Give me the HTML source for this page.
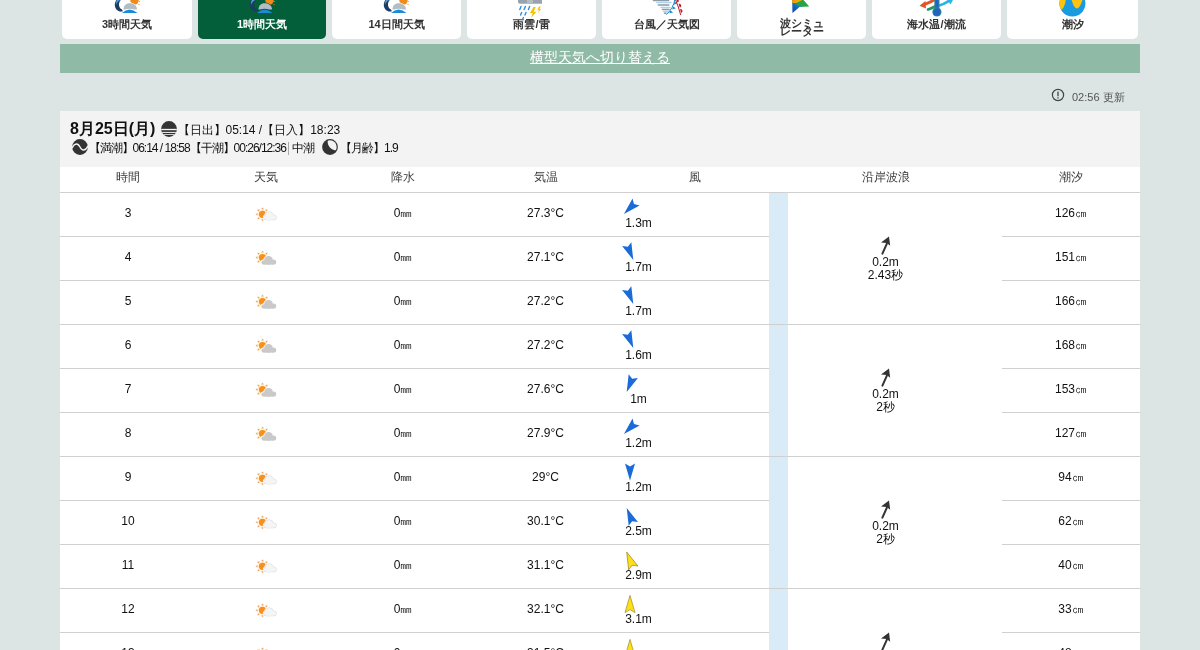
<!DOCTYPE html><html><head><meta charset="utf-8"><style>
*{box-sizing:border-box}
html,body{margin:0;padding:0}
body{will-change:transform;width:1200px;height:650px;overflow:hidden;background:#dce5e3;font-family:"Liberation Sans",sans-serif;position:relative;color:#222}
.abs{position:absolute}
.tab{position:absolute;top:-25px;height:64px;background:#fff;border-radius:5px;overflow:hidden}
.tab.on{background:#035e3a}
.ic{position:absolute}
.tab .lb{position:absolute;left:0;right:0;top:42.5px;text-align:center;font-size:11px;font-weight:bold;color:#333;line-height:13px;white-space:nowrap}
.tab.on .lb{color:#fff}
.tab .lb2{line-height:8.5px;top:43.5px}
.bar{position:absolute;left:60px;top:44px;width:1080px;height:29px;background:#8fbba6;text-align:center}
.bar span{color:#fff;font-size:14px;text-decoration:underline;line-height:28px;position:relative;top:-1px}
.card{position:absolute;left:60px;top:111px;width:1080px;height:560px;background:#fff}
.hd{position:absolute;left:0;top:0;width:1080px;height:56px;background:#f3f3f3}
.t{position:absolute;white-space:nowrap;line-height:14px}
.c{text-align:center}
.th{font-size:12px;color:#3a3a3a}
.td{font-size:12px;color:#111}
.ln{position:absolute;height:1px;background:#d0d0d0}
.strip{position:absolute;left:709px;top:82px;width:19px;height:500px;background:#d8ebf6}
</style></head><body>

<div class="tab" style="left:62px;width:130px"><div class="lb">3時間天気</div></div>
<svg class="ic" style="left:113.7px;top:-4px" width="28" height="17" viewBox="0 0 28 17">
<path d="M6 0 C2 3 -0.5 8 1.5 12 C3 15 6 16 9 15.5 L8 13.5 C5 12 4 8 6 5 C7 3.5 8 3 10 3 L11 0 Z" fill="#1d3b63"/>
<path d="M6 0 C3 3 1.5 6 2 9 C3 6 5 4 8 3.5 L10.5 3 L11.5 0Z" fill="#5a9fd6"/>
<circle cx="20.5" cy="4.5" r="4.2" fill="#f08a1c"/>
<circle cx="25.3" cy="5.5" r="0.6" fill="#f08a1c"/><circle cx="25" cy="8.5" r="0.6" fill="#f08a1c"/>
<path d="M8.5 13.8 C8.5 9 11.5 6.5 15.5 6.5 C19 6.5 23.5 8.5 23.5 13.5 Z" fill="#fff"/>
<path d="M9.5 13.5 C9.5 9.5 12 7.2 15.5 7.2 C19 7.2 23 9 23 13.5 Z" fill="#b3bdc6"/>
<path d="M7 17 Q15.5 8.6 24.5 17Z" fill="#fff"/>
<path d="M8 17 Q15.5 10 23.5 17Z" fill="#1b8bd8"/>
</svg>
<div class="tab on" style="left:198px;width:128px"><div class="lb">1時間天気</div></div>
<svg class="ic" style="left:248.7px;top:-4px" width="28" height="17" viewBox="0 0 28 17">
<path d="M6 0 C2 3 -0.5 8 1.5 12 C3 15 6 16 9 15.5 L8 13.5 C5 12 4 8 6 5 C7 3.5 8 3 10 3 L11 0 Z" fill="#1d3b63"/>
<path d="M6 0 C3 3 1.5 6 2 9 C3 6 5 4 8 3.5 L10.5 3 L11.5 0Z" fill="#5a9fd6"/>
<circle cx="20.5" cy="4.5" r="4.2" fill="#f08a1c"/>
<circle cx="25.3" cy="5.5" r="0.6" fill="#f08a1c"/><circle cx="25" cy="8.5" r="0.6" fill="#f08a1c"/>
<path d="M8.5 13.8 C8.5 9 11.5 6.5 15.5 6.5 C19 6.5 23.5 8.5 23.5 13.5 Z" fill="#035e3a"/>
<path d="M9.5 13.5 C9.5 9.5 12 7.2 15.5 7.2 C19 7.2 23 9 23 13.5 Z" fill="#b3bdc6"/>
<path d="M7 17 Q15.5 8.6 24.5 17Z" fill="#035e3a"/>
<path d="M8 17 Q15.5 10 23.5 17Z" fill="#1b8bd8"/>
</svg>
<div class="tab" style="left:332px;width:129px"><div class="lb">14日間天気</div></div>
<svg class="ic" style="left:383.2px;top:-4px" width="28" height="17" viewBox="0 0 28 17">
<path d="M6 0 C2 3 -0.5 8 1.5 12 C3 15 6 16 9 15.5 L8 13.5 C5 12 4 8 6 5 C7 3.5 8 3 10 3 L11 0 Z" fill="#1d3b63"/>
<path d="M6 0 C3 3 1.5 6 2 9 C3 6 5 4 8 3.5 L10.5 3 L11.5 0Z" fill="#5a9fd6"/>
<circle cx="20.5" cy="4.5" r="4.2" fill="#f08a1c"/>
<circle cx="25.3" cy="5.5" r="0.6" fill="#f08a1c"/><circle cx="25" cy="8.5" r="0.6" fill="#f08a1c"/>
<path d="M8.5 13.8 C8.5 9 11.5 6.5 15.5 6.5 C19 6.5 23.5 8.5 23.5 13.5 Z" fill="#fff"/>
<path d="M9.5 13.5 C9.5 9.5 12 7.2 15.5 7.2 C19 7.2 23 9 23 13.5 Z" fill="#b3bdc6"/>
<path d="M7 17 Q15.5 8.6 24.5 17Z" fill="#fff"/>
<path d="M8 17 Q15.5 10 23.5 17Z" fill="#1b8bd8"/>
</svg>
<div class="tab" style="left:467px;width:129px"><div class="lb">雨雲/雷</div></div>
<svg class="ic" style="left:514.0px;top:-6px" width="28" height="27" viewBox="0 0 28 27">
<rect x="4" y="0" width="25" height="9.8" rx="1.8" fill="#9aa3ab"/>
<rect x="13" y="0" width="6" height="9.8" fill="#b4bcc3"/>
<g stroke="#2a8fd6" stroke-width="1.4" stroke-linecap="round"><path d="M7 12.5 L5.8 15.5"/><path d="M11.3 12.5 L10.1 15.5"/><path d="M15.6 12.5 L14.4 15.5"/><path d="M7.6 18.5 L6.6 21"/><path d="M12 18.5 L11 21"/><path d="M9.5 23.5 L8.7 25"/></g>
<path d="M19.5 13 L16 19 L18.8 19 L17 24 L22.5 17.8 L19.7 17.8 L21.8 13Z" fill="#f7c300"/>
<path d="M25 12.5 L23.3 15.8 L24.9 15.8 L24 19 L27.2 15 L25.6 15 L26.7 12.5Z" fill="#f7c300"/>
</svg>
<div class="tab" style="left:602px;width:129px"><div class="lb">台風／天気図</div></div>
<svg class="ic" style="left:651.5px;top:-1px" width="34" height="18" viewBox="0 0 34 18">
<g stroke-linecap="round" stroke-width="1.5">
<path d="M1.5 1.5 L16.5 1.5" stroke="#8e9aa6"/><path d="M4.8 3.6 L19 3.6" stroke="#a9d3ee"/><path d="M6.3 6 L16.8 6" stroke="#8e9aa6"/><path d="M9 8.5 L18 8.5" stroke="#a9d3ee"/><path d="M10.5 10.6 L17 10.6" stroke="#8e9aa6"/><path d="M11.8 12.6 L16 12.6" stroke="#a9d3ee"/><path d="M12.5 14.2 L14 14.2" stroke="#8e9aa6"/>
</g>
<path d="M23 0 Q21.5 9 14.5 15.5" stroke="#1e8ad0" stroke-width="1" fill="none"/>
<path d="M22.3 2.5 L25.3 4.2 L22 5.8Z M21 7.4 L24 9.2 L20.2 10.6Z M18.4 11.5 L21.2 13.4 L17.2 14.2Z" fill="#1e8ad0"/>
<g transform="translate(-1.3 0)"><path d="M24.5 0 Q28 8 30 16" stroke="#c0182a" stroke-width="1" fill="none"/>
<path d="M25.3 0 A1.7 1.7 0 0 1 26.8 3.6Z M27.9 4.8 A1.8 1.8 0 0 1 29 8.6Z M29.4 10.2 A1.8 1.8 0 0 1 30.3 14Z" fill="#c0182a"/></g>
</svg>
<div class="tab" style="left:737px;width:129px"><div class="lb lb2">波シミュ<br>レーター</div></div>
<svg class="ic" style="left:791.5px;top:-4px" width="20" height="18" viewBox="0 0 20 18">
<defs><linearGradient id="wg" x1="0" y1="1" x2="0.7" y2="0"><stop offset="0" stop-color="#0b3c9c"/><stop offset="0.42" stop-color="#1a6fc8"/><stop offset="0.5" stop-color="#27a24c"/><stop offset="1" stop-color="#2aa048"/></linearGradient>
<linearGradient id="wg2" x1="0" y1="0" x2="1" y2="1"><stop offset="0" stop-color="#f07a10"/><stop offset="1" stop-color="#f5c800"/></linearGradient></defs>
<path d="M0 0 L8 0 L17.2 10.4 L7.5 11 L0.5 17 Z" fill="url(#wg)"/>
<path d="M0 0 L9 0 L9.5 4.5 L4 7 L0.2 7Z" fill="url(#wg2)" opacity="0.95"/>
</svg>
<div class="tab" style="left:872px;width:129px"><div class="lb">海水温/潮流</div></div>
<svg class="ic" style="left:914.5px;top:-4px" width="42" height="22" viewBox="0 0 42 22">
<path d="M8.5 8.8 C12 7.5 16 6 21 3" stroke="#e2532c" stroke-width="3" fill="none" stroke-linecap="round"/>
<path d="M4.5 9.8 L10.5 5 L11 12.5Z" fill="#e2532c"/>
<path d="M13 13.5 C15.5 12.5 17.5 11.8 20 10.5" stroke="#1e9a5c" stroke-width="2.6" fill="none" stroke-linecap="round"/>
<path d="M24 9.5 C28 8.5 31 6.8 34 4.8" stroke="#2cb4e4" stroke-width="2.6" fill="none" stroke-linecap="round"/>
<path d="M38.5 3 L31.5 2.5 L35.5 8.5Z" fill="#2cb4e4"/>
<rect x="19.3" y="0" width="5.2" height="13" fill="#3a8896"/>
<rect x="20.3" y="0" width="3.2" height="13" fill="#1b66c0"/>
<circle cx="21.9" cy="16" r="4.6" fill="#3a8896"/>
<circle cx="21.9" cy="16" r="3.7" fill="#1b66c0"/>
</svg>
<div class="tab" style="left:1007px;width:131px"><div class="lb">潮汐</div></div>
<svg class="ic" style="left:1059.1px;top:-10px" width="27" height="27" viewBox="0 0 27 27">
<defs><clipPath id="tc"><circle cx="13.4" cy="13.5" r="13"/></clipPath></defs>
<g clip-path="url(#tc)"><rect width="27" height="27" fill="#189be0"/>
<path d="M0 0 L8 0 C7.5 8 6 17 3 19.5 L0 19.5Z" fill="#ffc20e"/>
<path d="M10.5 0 L25.5 0 C24.5 8 21.5 18.5 17.9 18.5 C14.3 18.5 11.8 8 10.5 0Z" fill="#ffc20e"/>
</g></svg>
<div class="bar"><span>横型天気へ切り替える</span></div>
<svg class="abs" style="left:1051px;top:88px" width="14" height="14" viewBox="0 0 14 14"><circle cx="7" cy="7" r="5.6" fill="none" stroke="#444" stroke-width="1.2"/><rect x="6.35" y="3.6" width="1.3" height="4.6" fill="#444"/><rect x="6.35" y="9.2" width="1.3" height="1.3" fill="#444"/></svg>
<div class="t" style="left:1072px;top:90px;font-size:11px;color:#555">02:56 更新</div>
<div class="card">
<div class="hd"></div>
<div class="t" style="left:10px;top:9px;font-size:16px;font-weight:bold;color:#111;line-height:18px">8月25日(月)</div>
<svg class="abs" style="left:101px;top:10px" width="16" height="16" viewBox="0 0 16 16"><defs><clipPath id="cp"><circle cx="8" cy="8" r="7.9"/></clipPath></defs><g clip-path="url(#cp)"><rect width="16" height="16" fill="#333"/><rect y="7.85" width="16" height="1.35" fill="#f3f3f3"/><rect y="10.9" width="16" height="1" fill="#f3f3f3"/><rect y="13.1" width="16" height="0.8" fill="#f3f3f3"/></g></svg>
<div class="t" style="left:117.5px;top:12px;font-size:12px;color:#111">【日出】05:14 /【日入】18:23</div>
<svg class="abs" style="left:12px;top:28px" width="16" height="16" viewBox="0 0 16 16"><circle cx="8" cy="8" r="7.9" fill="#333"/><path d="M0 9.2 C2.3 3.8 6 3.8 8 8 C10 12.2 13.7 12.2 16 6.8" stroke="#f3f3f3" stroke-width="1.4" fill="none"/></svg>
<div class="t" style="left:28.5px;top:30px;font-size:12px;color:#111;letter-spacing:-1px">【満潮】06:14 / 18:58【干潮】00:26/12:36<span style="display:inline-block;width:1.5px;height:13px;background:#aaa;vertical-align:-3px;margin:0 2.5px 0 2px"></span>中潮</div>
<svg class="abs" style="left:262px;top:28px" width="16" height="16" viewBox="0 0 16 16"><defs><clipPath id="mc"><circle cx="8" cy="8" r="6.7"/></clipPath></defs><circle cx="8" cy="8" r="7.9" fill="#333"/><g clip-path="url(#mc)"><ellipse cx="11.5" cy="5" rx="5" ry="6.9" transform="rotate(-40 11.5 5)" fill="#f3f3f3"/></g></svg>
<div class="t" style="left:280px;top:30px;font-size:12px;color:#111;letter-spacing:-1px">【月齢】1.9</div>
<div class="t th c" style="left:0px;width:136px;top:59px">時間</div>
<div class="t th c" style="left:136px;width:139px;top:59px">天気</div>
<div class="t th c" style="left:275px;width:136px;top:59px">降水</div>
<div class="t th c" style="left:411px;width:149px;top:59px">気温</div>
<div class="t th c" style="left:560px;width:149px;top:59px">風</div>
<div class="t th c" style="left:709px;width:233px;top:59px">沿岸波浪</div>
<div class="t th c" style="left:942px;width:138px;top:59px">潮汐</div>
<div class="ln" style="left:0;top:81px;width:1080px"></div>
<div class="strip"></div>
<div class="t td c" style="left:0;width:136px;top:95px">3</div>
<div class="abs" style="left:195px;top:96px;width:22px;height:16px"><svg width="22" height="16" viewBox="0 0 22 16" style="overflow:visible"><path d="M7.50 0.40 L8.80 2.30 L6.20 2.30Z" fill="#d8884a" stroke="#fde3b0" stroke-width="0.5"/><path d="M12.38 2.42 L11.95 4.68 L10.12 2.85Z" fill="#d8884a" stroke="#fde3b0" stroke-width="0.5"/><path d="M14.40 7.30 L12.50 8.60 L12.50 6.00Z" fill="#d8884a" stroke="#fde3b0" stroke-width="0.5"/><path d="M12.38 12.18 L10.12 11.75 L11.95 9.92Z" fill="#d8884a" stroke="#fde3b0" stroke-width="0.5"/><path d="M7.50 14.20 L6.20 12.30 L8.80 12.30Z" fill="#d8884a" stroke="#fde3b0" stroke-width="0.5"/><path d="M2.62 12.18 L3.05 9.92 L4.88 11.75Z" fill="#d8884a" stroke="#fde3b0" stroke-width="0.5"/><path d="M0.60 7.30 L2.50 6.00 L2.50 8.60Z" fill="#d8884a" stroke="#fde3b0" stroke-width="0.5"/><path d="M2.62 2.42 L4.88 2.85 L3.05 4.68Z" fill="#d8884a" stroke="#fde3b0" stroke-width="0.5"/><circle cx="7.5" cy="7.3" r="4.1" fill="#fde7b8"/><circle cx="7.5" cy="7.3" r="3.6" fill="#f7901e"/><circle cx="14.3" cy="8.9" r="4.0" fill="#fff" stroke="#fff" stroke-width="2.2"/><circle cx="18.9" cy="10.4" r="2.3" fill="#fff" stroke="#fff" stroke-width="2.2"/><circle cx="11" cy="10.6" r="2.1" fill="#fff" stroke="#fff" stroke-width="2.2"/><rect x="11" y="10.4" width="7.9" height="2.3" fill="#fff" stroke="#fff" stroke-width="2.2"/><circle cx="14.3" cy="8.9" r="4.0" fill="#ccc" stroke="#cfcfcf" stroke-width="0.9"/><circle cx="18.9" cy="10.4" r="2.3" fill="#ccc" stroke="#cfcfcf" stroke-width="0.9"/><circle cx="11" cy="10.6" r="2.1" fill="#ccc" stroke="#cfcfcf" stroke-width="0.9"/><rect x="11" y="10.4" width="7.9" height="2.3" fill="#ccc" stroke="#cfcfcf" stroke-width="0.9"/><circle cx="14.3" cy="8.9" r="4.0" fill="#f3f5f7"/><circle cx="18.9" cy="10.4" r="2.3" fill="#f3f5f7"/><circle cx="11" cy="10.6" r="2.1" fill="#f3f5f7"/><rect x="11" y="10.4" width="7.9" height="2.3" fill="#f3f5f7"/></svg></div>
<div class="t td c" style="left:275px;width:136px;top:95px">0㎜</div>
<div class="t td c" style="left:411px;width:149px;top:95px">27.3°C</div>
<svg class="abs" style="left:559.7px;top:86.7px" width="20" height="20" viewBox="0 0 20 20"><path d="M5 1.4 L10 4.4 L15 1.4 L10 18.6 Z" fill="#1a6ad8" stroke="none" stroke-width="0" stroke-linejoin="round" transform="rotate(45 10 10)"/></svg>
<div class="t td c" style="left:538.5px;width:80px;top:105px">1.3m</div>
<div class="t td c" style="left:942px;width:138px;top:95px">126㎝</div>
<div class="ln" style="left:0;top:125px;width:709px"></div>
<div class="ln" style="left:942px;top:125px;width:138px"></div>
<div class="t td c" style="left:0;width:136px;top:139px">4</div>
<div class="abs" style="left:195px;top:140px;width:22px;height:16px"><svg width="22" height="16" viewBox="0 0 22 16" style="overflow:visible"><path d="M7.50 -0.30 L8.80 1.60 L6.20 1.60Z" fill="#d8884a" stroke="#fde3b0" stroke-width="0.5"/><path d="M12.38 1.72 L11.95 3.98 L10.12 2.15Z" fill="#d8884a" stroke="#fde3b0" stroke-width="0.5"/><path d="M14.40 6.60 L12.50 7.90 L12.50 5.30Z" fill="#d8884a" stroke="#fde3b0" stroke-width="0.5"/><path d="M12.38 11.48 L10.12 11.05 L11.95 9.22Z" fill="#d8884a" stroke="#fde3b0" stroke-width="0.5"/><path d="M7.50 13.50 L6.20 11.60 L8.80 11.60Z" fill="#d8884a" stroke="#fde3b0" stroke-width="0.5"/><path d="M2.62 11.48 L3.05 9.22 L4.88 11.05Z" fill="#d8884a" stroke="#fde3b0" stroke-width="0.5"/><path d="M0.60 6.60 L2.50 5.30 L2.50 7.90Z" fill="#d8884a" stroke="#fde3b0" stroke-width="0.5"/><path d="M2.62 1.72 L4.88 2.15 L3.05 3.98Z" fill="#d8884a" stroke="#fde3b0" stroke-width="0.5"/><circle cx="7.5" cy="6.6" r="4.1" fill="#fde7b8"/><circle cx="7.5" cy="6.6" r="3.6" fill="#f7901e"/><circle cx="13.5" cy="9.4" r="4.4" fill="#fff" stroke="#fff" stroke-width="1.6"/><circle cx="18.6" cy="11" r="2.6" fill="#fff" stroke="#fff" stroke-width="1.6"/><circle cx="8.6" cy="11.4" r="2.2" fill="#fff" stroke="#fff" stroke-width="1.6"/><rect x="8.6" y="11" width="10" height="2.6" fill="#fff" stroke="#fff" stroke-width="1.6"/><circle cx="13.5" cy="9.4" r="4.4" fill="#c9c9c9"/><circle cx="18.6" cy="11" r="2.6" fill="#c9c9c9"/><circle cx="8.6" cy="11.4" r="2.2" fill="#c9c9c9"/><rect x="8.6" y="11" width="10" height="2.6" fill="#c9c9c9"/></svg></div>
<div class="t td c" style="left:275px;width:136px;top:139px">0㎜</div>
<div class="t td c" style="left:411px;width:149px;top:139px">27.1°C</div>
<svg class="abs" style="left:559.7px;top:130.7px" width="20" height="20" viewBox="0 0 20 20"><path d="M5 1.4 L10 4.4 L15 1.4 L10 18.6 Z" fill="#1a6ad8" stroke="none" stroke-width="0" stroke-linejoin="round" transform="rotate(-22.5 10 10)"/></svg>
<div class="t td c" style="left:538.5px;width:80px;top:149px">1.7m</div>
<div class="t td c" style="left:942px;width:138px;top:139px">151㎝</div>
<div class="ln" style="left:0;top:169px;width:709px"></div>
<div class="ln" style="left:942px;top:169px;width:138px"></div>
<div class="t td c" style="left:0;width:136px;top:183px">5</div>
<div class="abs" style="left:195px;top:184px;width:22px;height:16px"><svg width="22" height="16" viewBox="0 0 22 16" style="overflow:visible"><path d="M7.50 -0.30 L8.80 1.60 L6.20 1.60Z" fill="#d8884a" stroke="#fde3b0" stroke-width="0.5"/><path d="M12.38 1.72 L11.95 3.98 L10.12 2.15Z" fill="#d8884a" stroke="#fde3b0" stroke-width="0.5"/><path d="M14.40 6.60 L12.50 7.90 L12.50 5.30Z" fill="#d8884a" stroke="#fde3b0" stroke-width="0.5"/><path d="M12.38 11.48 L10.12 11.05 L11.95 9.22Z" fill="#d8884a" stroke="#fde3b0" stroke-width="0.5"/><path d="M7.50 13.50 L6.20 11.60 L8.80 11.60Z" fill="#d8884a" stroke="#fde3b0" stroke-width="0.5"/><path d="M2.62 11.48 L3.05 9.22 L4.88 11.05Z" fill="#d8884a" stroke="#fde3b0" stroke-width="0.5"/><path d="M0.60 6.60 L2.50 5.30 L2.50 7.90Z" fill="#d8884a" stroke="#fde3b0" stroke-width="0.5"/><path d="M2.62 1.72 L4.88 2.15 L3.05 3.98Z" fill="#d8884a" stroke="#fde3b0" stroke-width="0.5"/><circle cx="7.5" cy="6.6" r="4.1" fill="#fde7b8"/><circle cx="7.5" cy="6.6" r="3.6" fill="#f7901e"/><circle cx="13.5" cy="9.4" r="4.4" fill="#fff" stroke="#fff" stroke-width="1.6"/><circle cx="18.6" cy="11" r="2.6" fill="#fff" stroke="#fff" stroke-width="1.6"/><circle cx="8.6" cy="11.4" r="2.2" fill="#fff" stroke="#fff" stroke-width="1.6"/><rect x="8.6" y="11" width="10" height="2.6" fill="#fff" stroke="#fff" stroke-width="1.6"/><circle cx="13.5" cy="9.4" r="4.4" fill="#c9c9c9"/><circle cx="18.6" cy="11" r="2.6" fill="#c9c9c9"/><circle cx="8.6" cy="11.4" r="2.2" fill="#c9c9c9"/><rect x="8.6" y="11" width="10" height="2.6" fill="#c9c9c9"/></svg></div>
<div class="t td c" style="left:275px;width:136px;top:183px">0㎜</div>
<div class="t td c" style="left:411px;width:149px;top:183px">27.2°C</div>
<svg class="abs" style="left:559.7px;top:174.7px" width="20" height="20" viewBox="0 0 20 20"><path d="M5 1.4 L10 4.4 L15 1.4 L10 18.6 Z" fill="#1a6ad8" stroke="none" stroke-width="0" stroke-linejoin="round" transform="rotate(-22.5 10 10)"/></svg>
<div class="t td c" style="left:538.5px;width:80px;top:193px">1.7m</div>
<div class="t td c" style="left:942px;width:138px;top:183px">166㎝</div>
<div class="ln" style="left:0;top:213px;width:709px"></div>
<div class="ln" style="left:942px;top:213px;width:138px"></div>
<div class="ln" style="left:709px;top:213px;width:233px"></div>
<div class="t td c" style="left:0;width:136px;top:227px">6</div>
<div class="abs" style="left:195px;top:228px;width:22px;height:16px"><svg width="22" height="16" viewBox="0 0 22 16" style="overflow:visible"><path d="M7.50 -0.30 L8.80 1.60 L6.20 1.60Z" fill="#d8884a" stroke="#fde3b0" stroke-width="0.5"/><path d="M12.38 1.72 L11.95 3.98 L10.12 2.15Z" fill="#d8884a" stroke="#fde3b0" stroke-width="0.5"/><path d="M14.40 6.60 L12.50 7.90 L12.50 5.30Z" fill="#d8884a" stroke="#fde3b0" stroke-width="0.5"/><path d="M12.38 11.48 L10.12 11.05 L11.95 9.22Z" fill="#d8884a" stroke="#fde3b0" stroke-width="0.5"/><path d="M7.50 13.50 L6.20 11.60 L8.80 11.60Z" fill="#d8884a" stroke="#fde3b0" stroke-width="0.5"/><path d="M2.62 11.48 L3.05 9.22 L4.88 11.05Z" fill="#d8884a" stroke="#fde3b0" stroke-width="0.5"/><path d="M0.60 6.60 L2.50 5.30 L2.50 7.90Z" fill="#d8884a" stroke="#fde3b0" stroke-width="0.5"/><path d="M2.62 1.72 L4.88 2.15 L3.05 3.98Z" fill="#d8884a" stroke="#fde3b0" stroke-width="0.5"/><circle cx="7.5" cy="6.6" r="4.1" fill="#fde7b8"/><circle cx="7.5" cy="6.6" r="3.6" fill="#f7901e"/><circle cx="13.5" cy="9.4" r="4.4" fill="#fff" stroke="#fff" stroke-width="1.6"/><circle cx="18.6" cy="11" r="2.6" fill="#fff" stroke="#fff" stroke-width="1.6"/><circle cx="8.6" cy="11.4" r="2.2" fill="#fff" stroke="#fff" stroke-width="1.6"/><rect x="8.6" y="11" width="10" height="2.6" fill="#fff" stroke="#fff" stroke-width="1.6"/><circle cx="13.5" cy="9.4" r="4.4" fill="#c9c9c9"/><circle cx="18.6" cy="11" r="2.6" fill="#c9c9c9"/><circle cx="8.6" cy="11.4" r="2.2" fill="#c9c9c9"/><rect x="8.6" y="11" width="10" height="2.6" fill="#c9c9c9"/></svg></div>
<div class="t td c" style="left:275px;width:136px;top:227px">0㎜</div>
<div class="t td c" style="left:411px;width:149px;top:227px">27.2°C</div>
<svg class="abs" style="left:559.7px;top:218.7px" width="20" height="20" viewBox="0 0 20 20"><path d="M5 1.4 L10 4.4 L15 1.4 L10 18.6 Z" fill="#1a6ad8" stroke="none" stroke-width="0" stroke-linejoin="round" transform="rotate(-22.5 10 10)"/></svg>
<div class="t td c" style="left:538.5px;width:80px;top:237px">1.6m</div>
<div class="t td c" style="left:942px;width:138px;top:227px">168㎝</div>
<div class="ln" style="left:0;top:257px;width:709px"></div>
<div class="ln" style="left:942px;top:257px;width:138px"></div>
<div class="t td c" style="left:0;width:136px;top:271px">7</div>
<div class="abs" style="left:195px;top:272px;width:22px;height:16px"><svg width="22" height="16" viewBox="0 0 22 16" style="overflow:visible"><path d="M7.50 -0.30 L8.80 1.60 L6.20 1.60Z" fill="#d8884a" stroke="#fde3b0" stroke-width="0.5"/><path d="M12.38 1.72 L11.95 3.98 L10.12 2.15Z" fill="#d8884a" stroke="#fde3b0" stroke-width="0.5"/><path d="M14.40 6.60 L12.50 7.90 L12.50 5.30Z" fill="#d8884a" stroke="#fde3b0" stroke-width="0.5"/><path d="M12.38 11.48 L10.12 11.05 L11.95 9.22Z" fill="#d8884a" stroke="#fde3b0" stroke-width="0.5"/><path d="M7.50 13.50 L6.20 11.60 L8.80 11.60Z" fill="#d8884a" stroke="#fde3b0" stroke-width="0.5"/><path d="M2.62 11.48 L3.05 9.22 L4.88 11.05Z" fill="#d8884a" stroke="#fde3b0" stroke-width="0.5"/><path d="M0.60 6.60 L2.50 5.30 L2.50 7.90Z" fill="#d8884a" stroke="#fde3b0" stroke-width="0.5"/><path d="M2.62 1.72 L4.88 2.15 L3.05 3.98Z" fill="#d8884a" stroke="#fde3b0" stroke-width="0.5"/><circle cx="7.5" cy="6.6" r="4.1" fill="#fde7b8"/><circle cx="7.5" cy="6.6" r="3.6" fill="#f7901e"/><circle cx="13.5" cy="9.4" r="4.4" fill="#fff" stroke="#fff" stroke-width="1.6"/><circle cx="18.6" cy="11" r="2.6" fill="#fff" stroke="#fff" stroke-width="1.6"/><circle cx="8.6" cy="11.4" r="2.2" fill="#fff" stroke="#fff" stroke-width="1.6"/><rect x="8.6" y="11" width="10" height="2.6" fill="#fff" stroke="#fff" stroke-width="1.6"/><circle cx="13.5" cy="9.4" r="4.4" fill="#c9c9c9"/><circle cx="18.6" cy="11" r="2.6" fill="#c9c9c9"/><circle cx="8.6" cy="11.4" r="2.2" fill="#c9c9c9"/><rect x="8.6" y="11" width="10" height="2.6" fill="#c9c9c9"/></svg></div>
<div class="t td c" style="left:275px;width:136px;top:271px">0㎜</div>
<div class="t td c" style="left:411px;width:149px;top:271px">27.6°C</div>
<svg class="abs" style="left:559.7px;top:262.7px" width="20" height="20" viewBox="0 0 20 20"><path d="M5 1.4 L10 4.4 L15 1.4 L10 18.6 Z" fill="#1a6ad8" stroke="none" stroke-width="0" stroke-linejoin="round" transform="rotate(22.5 10 10)"/></svg>
<div class="t td c" style="left:538.5px;width:80px;top:281px">1m</div>
<div class="t td c" style="left:942px;width:138px;top:271px">153㎝</div>
<div class="ln" style="left:0;top:301px;width:709px"></div>
<div class="ln" style="left:942px;top:301px;width:138px"></div>
<div class="t td c" style="left:0;width:136px;top:315px">8</div>
<div class="abs" style="left:195px;top:316px;width:22px;height:16px"><svg width="22" height="16" viewBox="0 0 22 16" style="overflow:visible"><path d="M7.50 -0.30 L8.80 1.60 L6.20 1.60Z" fill="#d8884a" stroke="#fde3b0" stroke-width="0.5"/><path d="M12.38 1.72 L11.95 3.98 L10.12 2.15Z" fill="#d8884a" stroke="#fde3b0" stroke-width="0.5"/><path d="M14.40 6.60 L12.50 7.90 L12.50 5.30Z" fill="#d8884a" stroke="#fde3b0" stroke-width="0.5"/><path d="M12.38 11.48 L10.12 11.05 L11.95 9.22Z" fill="#d8884a" stroke="#fde3b0" stroke-width="0.5"/><path d="M7.50 13.50 L6.20 11.60 L8.80 11.60Z" fill="#d8884a" stroke="#fde3b0" stroke-width="0.5"/><path d="M2.62 11.48 L3.05 9.22 L4.88 11.05Z" fill="#d8884a" stroke="#fde3b0" stroke-width="0.5"/><path d="M0.60 6.60 L2.50 5.30 L2.50 7.90Z" fill="#d8884a" stroke="#fde3b0" stroke-width="0.5"/><path d="M2.62 1.72 L4.88 2.15 L3.05 3.98Z" fill="#d8884a" stroke="#fde3b0" stroke-width="0.5"/><circle cx="7.5" cy="6.6" r="4.1" fill="#fde7b8"/><circle cx="7.5" cy="6.6" r="3.6" fill="#f7901e"/><circle cx="13.5" cy="9.4" r="4.4" fill="#fff" stroke="#fff" stroke-width="1.6"/><circle cx="18.6" cy="11" r="2.6" fill="#fff" stroke="#fff" stroke-width="1.6"/><circle cx="8.6" cy="11.4" r="2.2" fill="#fff" stroke="#fff" stroke-width="1.6"/><rect x="8.6" y="11" width="10" height="2.6" fill="#fff" stroke="#fff" stroke-width="1.6"/><circle cx="13.5" cy="9.4" r="4.4" fill="#c9c9c9"/><circle cx="18.6" cy="11" r="2.6" fill="#c9c9c9"/><circle cx="8.6" cy="11.4" r="2.2" fill="#c9c9c9"/><rect x="8.6" y="11" width="10" height="2.6" fill="#c9c9c9"/></svg></div>
<div class="t td c" style="left:275px;width:136px;top:315px">0㎜</div>
<div class="t td c" style="left:411px;width:149px;top:315px">27.9°C</div>
<svg class="abs" style="left:559.7px;top:306.7px" width="20" height="20" viewBox="0 0 20 20"><path d="M5 1.4 L10 4.4 L15 1.4 L10 18.6 Z" fill="#1a6ad8" stroke="none" stroke-width="0" stroke-linejoin="round" transform="rotate(45 10 10)"/></svg>
<div class="t td c" style="left:538.5px;width:80px;top:325px">1.2m</div>
<div class="t td c" style="left:942px;width:138px;top:315px">127㎝</div>
<div class="ln" style="left:0;top:345px;width:709px"></div>
<div class="ln" style="left:942px;top:345px;width:138px"></div>
<div class="ln" style="left:709px;top:345px;width:233px"></div>
<div class="t td c" style="left:0;width:136px;top:359px">9</div>
<div class="abs" style="left:195px;top:360px;width:22px;height:16px"><svg width="22" height="16" viewBox="0 0 22 16" style="overflow:visible"><path d="M7.50 0.40 L8.80 2.30 L6.20 2.30Z" fill="#d8884a" stroke="#fde3b0" stroke-width="0.5"/><path d="M12.38 2.42 L11.95 4.68 L10.12 2.85Z" fill="#d8884a" stroke="#fde3b0" stroke-width="0.5"/><path d="M14.40 7.30 L12.50 8.60 L12.50 6.00Z" fill="#d8884a" stroke="#fde3b0" stroke-width="0.5"/><path d="M12.38 12.18 L10.12 11.75 L11.95 9.92Z" fill="#d8884a" stroke="#fde3b0" stroke-width="0.5"/><path d="M7.50 14.20 L6.20 12.30 L8.80 12.30Z" fill="#d8884a" stroke="#fde3b0" stroke-width="0.5"/><path d="M2.62 12.18 L3.05 9.92 L4.88 11.75Z" fill="#d8884a" stroke="#fde3b0" stroke-width="0.5"/><path d="M0.60 7.30 L2.50 6.00 L2.50 8.60Z" fill="#d8884a" stroke="#fde3b0" stroke-width="0.5"/><path d="M2.62 2.42 L4.88 2.85 L3.05 4.68Z" fill="#d8884a" stroke="#fde3b0" stroke-width="0.5"/><circle cx="7.5" cy="7.3" r="4.1" fill="#fde7b8"/><circle cx="7.5" cy="7.3" r="3.6" fill="#f7901e"/><circle cx="14.3" cy="8.9" r="4.0" fill="#fff" stroke="#fff" stroke-width="2.2"/><circle cx="18.9" cy="10.4" r="2.3" fill="#fff" stroke="#fff" stroke-width="2.2"/><circle cx="11" cy="10.6" r="2.1" fill="#fff" stroke="#fff" stroke-width="2.2"/><rect x="11" y="10.4" width="7.9" height="2.3" fill="#fff" stroke="#fff" stroke-width="2.2"/><circle cx="14.3" cy="8.9" r="4.0" fill="#ccc" stroke="#cfcfcf" stroke-width="0.9"/><circle cx="18.9" cy="10.4" r="2.3" fill="#ccc" stroke="#cfcfcf" stroke-width="0.9"/><circle cx="11" cy="10.6" r="2.1" fill="#ccc" stroke="#cfcfcf" stroke-width="0.9"/><rect x="11" y="10.4" width="7.9" height="2.3" fill="#ccc" stroke="#cfcfcf" stroke-width="0.9"/><circle cx="14.3" cy="8.9" r="4.0" fill="#f3f5f7"/><circle cx="18.9" cy="10.4" r="2.3" fill="#f3f5f7"/><circle cx="11" cy="10.6" r="2.1" fill="#f3f5f7"/><rect x="11" y="10.4" width="7.9" height="2.3" fill="#f3f5f7"/></svg></div>
<div class="t td c" style="left:275px;width:136px;top:359px">0㎜</div>
<div class="t td c" style="left:411px;width:149px;top:359px">29°C</div>
<svg class="abs" style="left:559.7px;top:350.7px" width="20" height="20" viewBox="0 0 20 20"><path d="M5 1.4 L10 4.4 L15 1.4 L10 18.6 Z" fill="#1a6ad8" stroke="none" stroke-width="0" stroke-linejoin="round" transform="rotate(0 10 10)"/></svg>
<div class="t td c" style="left:538.5px;width:80px;top:369px">1.2m</div>
<div class="t td c" style="left:942px;width:138px;top:359px">94㎝</div>
<div class="ln" style="left:0;top:389px;width:709px"></div>
<div class="ln" style="left:942px;top:389px;width:138px"></div>
<div class="t td c" style="left:0;width:136px;top:403px">10</div>
<div class="abs" style="left:195px;top:404px;width:22px;height:16px"><svg width="22" height="16" viewBox="0 0 22 16" style="overflow:visible"><path d="M7.50 0.40 L8.80 2.30 L6.20 2.30Z" fill="#d8884a" stroke="#fde3b0" stroke-width="0.5"/><path d="M12.38 2.42 L11.95 4.68 L10.12 2.85Z" fill="#d8884a" stroke="#fde3b0" stroke-width="0.5"/><path d="M14.40 7.30 L12.50 8.60 L12.50 6.00Z" fill="#d8884a" stroke="#fde3b0" stroke-width="0.5"/><path d="M12.38 12.18 L10.12 11.75 L11.95 9.92Z" fill="#d8884a" stroke="#fde3b0" stroke-width="0.5"/><path d="M7.50 14.20 L6.20 12.30 L8.80 12.30Z" fill="#d8884a" stroke="#fde3b0" stroke-width="0.5"/><path d="M2.62 12.18 L3.05 9.92 L4.88 11.75Z" fill="#d8884a" stroke="#fde3b0" stroke-width="0.5"/><path d="M0.60 7.30 L2.50 6.00 L2.50 8.60Z" fill="#d8884a" stroke="#fde3b0" stroke-width="0.5"/><path d="M2.62 2.42 L4.88 2.85 L3.05 4.68Z" fill="#d8884a" stroke="#fde3b0" stroke-width="0.5"/><circle cx="7.5" cy="7.3" r="4.1" fill="#fde7b8"/><circle cx="7.5" cy="7.3" r="3.6" fill="#f7901e"/><circle cx="14.3" cy="8.9" r="4.0" fill="#fff" stroke="#fff" stroke-width="2.2"/><circle cx="18.9" cy="10.4" r="2.3" fill="#fff" stroke="#fff" stroke-width="2.2"/><circle cx="11" cy="10.6" r="2.1" fill="#fff" stroke="#fff" stroke-width="2.2"/><rect x="11" y="10.4" width="7.9" height="2.3" fill="#fff" stroke="#fff" stroke-width="2.2"/><circle cx="14.3" cy="8.9" r="4.0" fill="#ccc" stroke="#cfcfcf" stroke-width="0.9"/><circle cx="18.9" cy="10.4" r="2.3" fill="#ccc" stroke="#cfcfcf" stroke-width="0.9"/><circle cx="11" cy="10.6" r="2.1" fill="#ccc" stroke="#cfcfcf" stroke-width="0.9"/><rect x="11" y="10.4" width="7.9" height="2.3" fill="#ccc" stroke="#cfcfcf" stroke-width="0.9"/><circle cx="14.3" cy="8.9" r="4.0" fill="#f3f5f7"/><circle cx="18.9" cy="10.4" r="2.3" fill="#f3f5f7"/><circle cx="11" cy="10.6" r="2.1" fill="#f3f5f7"/><rect x="11" y="10.4" width="7.9" height="2.3" fill="#f3f5f7"/></svg></div>
<div class="t td c" style="left:275px;width:136px;top:403px">0㎜</div>
<div class="t td c" style="left:411px;width:149px;top:403px">30.1°C</div>
<svg class="abs" style="left:559.7px;top:394.7px" width="20" height="20" viewBox="0 0 20 20"><path d="M5 1.4 L10 4.4 L15 1.4 L10 18.6 Z" fill="#1a6ad8" stroke="none" stroke-width="0" stroke-linejoin="round" transform="rotate(157.5 10 10)"/></svg>
<div class="t td c" style="left:538.5px;width:80px;top:413px">2.5m</div>
<div class="t td c" style="left:942px;width:138px;top:403px">62㎝</div>
<div class="ln" style="left:0;top:433px;width:709px"></div>
<div class="ln" style="left:942px;top:433px;width:138px"></div>
<div class="t td c" style="left:0;width:136px;top:447px">11</div>
<div class="abs" style="left:195px;top:448px;width:22px;height:16px"><svg width="22" height="16" viewBox="0 0 22 16" style="overflow:visible"><path d="M7.50 0.40 L8.80 2.30 L6.20 2.30Z" fill="#d8884a" stroke="#fde3b0" stroke-width="0.5"/><path d="M12.38 2.42 L11.95 4.68 L10.12 2.85Z" fill="#d8884a" stroke="#fde3b0" stroke-width="0.5"/><path d="M14.40 7.30 L12.50 8.60 L12.50 6.00Z" fill="#d8884a" stroke="#fde3b0" stroke-width="0.5"/><path d="M12.38 12.18 L10.12 11.75 L11.95 9.92Z" fill="#d8884a" stroke="#fde3b0" stroke-width="0.5"/><path d="M7.50 14.20 L6.20 12.30 L8.80 12.30Z" fill="#d8884a" stroke="#fde3b0" stroke-width="0.5"/><path d="M2.62 12.18 L3.05 9.92 L4.88 11.75Z" fill="#d8884a" stroke="#fde3b0" stroke-width="0.5"/><path d="M0.60 7.30 L2.50 6.00 L2.50 8.60Z" fill="#d8884a" stroke="#fde3b0" stroke-width="0.5"/><path d="M2.62 2.42 L4.88 2.85 L3.05 4.68Z" fill="#d8884a" stroke="#fde3b0" stroke-width="0.5"/><circle cx="7.5" cy="7.3" r="4.1" fill="#fde7b8"/><circle cx="7.5" cy="7.3" r="3.6" fill="#f7901e"/><circle cx="14.3" cy="8.9" r="4.0" fill="#fff" stroke="#fff" stroke-width="2.2"/><circle cx="18.9" cy="10.4" r="2.3" fill="#fff" stroke="#fff" stroke-width="2.2"/><circle cx="11" cy="10.6" r="2.1" fill="#fff" stroke="#fff" stroke-width="2.2"/><rect x="11" y="10.4" width="7.9" height="2.3" fill="#fff" stroke="#fff" stroke-width="2.2"/><circle cx="14.3" cy="8.9" r="4.0" fill="#ccc" stroke="#cfcfcf" stroke-width="0.9"/><circle cx="18.9" cy="10.4" r="2.3" fill="#ccc" stroke="#cfcfcf" stroke-width="0.9"/><circle cx="11" cy="10.6" r="2.1" fill="#ccc" stroke="#cfcfcf" stroke-width="0.9"/><rect x="11" y="10.4" width="7.9" height="2.3" fill="#ccc" stroke="#cfcfcf" stroke-width="0.9"/><circle cx="14.3" cy="8.9" r="4.0" fill="#f3f5f7"/><circle cx="18.9" cy="10.4" r="2.3" fill="#f3f5f7"/><circle cx="11" cy="10.6" r="2.1" fill="#f3f5f7"/><rect x="11" y="10.4" width="7.9" height="2.3" fill="#f3f5f7"/></svg></div>
<div class="t td c" style="left:275px;width:136px;top:447px">0㎜</div>
<div class="t td c" style="left:411px;width:149px;top:447px">31.1°C</div>
<svg class="abs" style="left:559.7px;top:438.7px" width="20" height="20" viewBox="0 0 20 20"><path d="M5 1.4 L10 4.4 L15 1.4 L10 18.6 Z" fill="#ffe018" stroke="#9c8a2a" stroke-width="0.7" stroke-linejoin="round" transform="rotate(157.5 10 10)"/></svg>
<div class="t td c" style="left:538.5px;width:80px;top:457px">2.9m</div>
<div class="t td c" style="left:942px;width:138px;top:447px">40㎝</div>
<div class="ln" style="left:0;top:477px;width:709px"></div>
<div class="ln" style="left:942px;top:477px;width:138px"></div>
<div class="ln" style="left:709px;top:477px;width:233px"></div>
<div class="t td c" style="left:0;width:136px;top:491px">12</div>
<div class="abs" style="left:195px;top:492px;width:22px;height:16px"><svg width="22" height="16" viewBox="0 0 22 16" style="overflow:visible"><path d="M7.50 0.40 L8.80 2.30 L6.20 2.30Z" fill="#d8884a" stroke="#fde3b0" stroke-width="0.5"/><path d="M12.38 2.42 L11.95 4.68 L10.12 2.85Z" fill="#d8884a" stroke="#fde3b0" stroke-width="0.5"/><path d="M14.40 7.30 L12.50 8.60 L12.50 6.00Z" fill="#d8884a" stroke="#fde3b0" stroke-width="0.5"/><path d="M12.38 12.18 L10.12 11.75 L11.95 9.92Z" fill="#d8884a" stroke="#fde3b0" stroke-width="0.5"/><path d="M7.50 14.20 L6.20 12.30 L8.80 12.30Z" fill="#d8884a" stroke="#fde3b0" stroke-width="0.5"/><path d="M2.62 12.18 L3.05 9.92 L4.88 11.75Z" fill="#d8884a" stroke="#fde3b0" stroke-width="0.5"/><path d="M0.60 7.30 L2.50 6.00 L2.50 8.60Z" fill="#d8884a" stroke="#fde3b0" stroke-width="0.5"/><path d="M2.62 2.42 L4.88 2.85 L3.05 4.68Z" fill="#d8884a" stroke="#fde3b0" stroke-width="0.5"/><circle cx="7.5" cy="7.3" r="4.1" fill="#fde7b8"/><circle cx="7.5" cy="7.3" r="3.6" fill="#f7901e"/><circle cx="14.3" cy="8.9" r="4.0" fill="#fff" stroke="#fff" stroke-width="2.2"/><circle cx="18.9" cy="10.4" r="2.3" fill="#fff" stroke="#fff" stroke-width="2.2"/><circle cx="11" cy="10.6" r="2.1" fill="#fff" stroke="#fff" stroke-width="2.2"/><rect x="11" y="10.4" width="7.9" height="2.3" fill="#fff" stroke="#fff" stroke-width="2.2"/><circle cx="14.3" cy="8.9" r="4.0" fill="#ccc" stroke="#cfcfcf" stroke-width="0.9"/><circle cx="18.9" cy="10.4" r="2.3" fill="#ccc" stroke="#cfcfcf" stroke-width="0.9"/><circle cx="11" cy="10.6" r="2.1" fill="#ccc" stroke="#cfcfcf" stroke-width="0.9"/><rect x="11" y="10.4" width="7.9" height="2.3" fill="#ccc" stroke="#cfcfcf" stroke-width="0.9"/><circle cx="14.3" cy="8.9" r="4.0" fill="#f3f5f7"/><circle cx="18.9" cy="10.4" r="2.3" fill="#f3f5f7"/><circle cx="11" cy="10.6" r="2.1" fill="#f3f5f7"/><rect x="11" y="10.4" width="7.9" height="2.3" fill="#f3f5f7"/></svg></div>
<div class="t td c" style="left:275px;width:136px;top:491px">0㎜</div>
<div class="t td c" style="left:411px;width:149px;top:491px">32.1°C</div>
<svg class="abs" style="left:559.7px;top:482.7px" width="20" height="20" viewBox="0 0 20 20"><path d="M5 1.4 L10 4.4 L15 1.4 L10 18.6 Z" fill="#ffe018" stroke="#9c8a2a" stroke-width="0.7" stroke-linejoin="round" transform="rotate(180 10 10)"/></svg>
<div class="t td c" style="left:538.5px;width:80px;top:501px">3.1m</div>
<div class="t td c" style="left:942px;width:138px;top:491px">33㎝</div>
<div class="ln" style="left:0;top:521px;width:709px"></div>
<div class="ln" style="left:942px;top:521px;width:138px"></div>
<div class="t td c" style="left:0;width:136px;top:535px">13</div>
<div class="abs" style="left:195px;top:536px;width:22px;height:16px"><svg width="22" height="16" viewBox="0 0 22 16" style="overflow:visible"><path d="M7.50 0.40 L8.80 2.30 L6.20 2.30Z" fill="#d8884a" stroke="#fde3b0" stroke-width="0.5"/><path d="M12.38 2.42 L11.95 4.68 L10.12 2.85Z" fill="#d8884a" stroke="#fde3b0" stroke-width="0.5"/><path d="M14.40 7.30 L12.50 8.60 L12.50 6.00Z" fill="#d8884a" stroke="#fde3b0" stroke-width="0.5"/><path d="M12.38 12.18 L10.12 11.75 L11.95 9.92Z" fill="#d8884a" stroke="#fde3b0" stroke-width="0.5"/><path d="M7.50 14.20 L6.20 12.30 L8.80 12.30Z" fill="#d8884a" stroke="#fde3b0" stroke-width="0.5"/><path d="M2.62 12.18 L3.05 9.92 L4.88 11.75Z" fill="#d8884a" stroke="#fde3b0" stroke-width="0.5"/><path d="M0.60 7.30 L2.50 6.00 L2.50 8.60Z" fill="#d8884a" stroke="#fde3b0" stroke-width="0.5"/><path d="M2.62 2.42 L4.88 2.85 L3.05 4.68Z" fill="#d8884a" stroke="#fde3b0" stroke-width="0.5"/><circle cx="7.5" cy="7.3" r="4.1" fill="#fde7b8"/><circle cx="7.5" cy="7.3" r="3.6" fill="#f7901e"/><circle cx="14.3" cy="8.9" r="4.0" fill="#fff" stroke="#fff" stroke-width="2.2"/><circle cx="18.9" cy="10.4" r="2.3" fill="#fff" stroke="#fff" stroke-width="2.2"/><circle cx="11" cy="10.6" r="2.1" fill="#fff" stroke="#fff" stroke-width="2.2"/><rect x="11" y="10.4" width="7.9" height="2.3" fill="#fff" stroke="#fff" stroke-width="2.2"/><circle cx="14.3" cy="8.9" r="4.0" fill="#ccc" stroke="#cfcfcf" stroke-width="0.9"/><circle cx="18.9" cy="10.4" r="2.3" fill="#ccc" stroke="#cfcfcf" stroke-width="0.9"/><circle cx="11" cy="10.6" r="2.1" fill="#ccc" stroke="#cfcfcf" stroke-width="0.9"/><rect x="11" y="10.4" width="7.9" height="2.3" fill="#ccc" stroke="#cfcfcf" stroke-width="0.9"/><circle cx="14.3" cy="8.9" r="4.0" fill="#f3f5f7"/><circle cx="18.9" cy="10.4" r="2.3" fill="#f3f5f7"/><circle cx="11" cy="10.6" r="2.1" fill="#f3f5f7"/><rect x="11" y="10.4" width="7.9" height="2.3" fill="#f3f5f7"/></svg></div>
<div class="t td c" style="left:275px;width:136px;top:535px">0㎜</div>
<div class="t td c" style="left:411px;width:149px;top:535px">31.5°C</div>
<svg class="abs" style="left:559.7px;top:526.7px" width="20" height="20" viewBox="0 0 20 20"><path d="M5 1.4 L10 4.4 L15 1.4 L10 18.6 Z" fill="#ffe018" stroke="#9c8a2a" stroke-width="0.7" stroke-linejoin="round" transform="rotate(180 10 10)"/></svg>
<div class="t td c" style="left:538.5px;width:80px;top:545px">3.3m</div>
<div class="t td c" style="left:942px;width:138px;top:535px">48㎝</div>
<div class="ln" style="left:0;top:565px;width:709px"></div>
<div class="ln" style="left:942px;top:565px;width:138px"></div>
<svg class="abs" style="left:818px;top:124px" width="16" height="20" viewBox="0 0 16 20"><path d="M4.4 18.6 L8.9 8.6" stroke="#333" stroke-width="2" stroke-linecap="round"/><path d="M11 1.6 L12.2 10.8 L8.7 8.1 L3 7.6 Z" fill="#333"/></svg>
<div class="t td c" style="left:709px;width:233px;top:145px;line-height:13px">0.2m<br>2.43秒</div>
<svg class="abs" style="left:818px;top:256px" width="16" height="20" viewBox="0 0 16 20"><path d="M4.4 18.6 L8.9 8.6" stroke="#333" stroke-width="2" stroke-linecap="round"/><path d="M11 1.6 L12.2 10.8 L8.7 8.1 L3 7.6 Z" fill="#333"/></svg>
<div class="t td c" style="left:709px;width:233px;top:277px;line-height:13px">0.2m<br>2秒</div>
<svg class="abs" style="left:818px;top:388px" width="16" height="20" viewBox="0 0 16 20"><path d="M4.4 18.6 L8.9 8.6" stroke="#333" stroke-width="2" stroke-linecap="round"/><path d="M11 1.6 L12.2 10.8 L8.7 8.1 L3 7.6 Z" fill="#333"/></svg>
<div class="t td c" style="left:709px;width:233px;top:409px;line-height:13px">0.2m<br>2秒</div>
<svg class="abs" style="left:818px;top:520px" width="16" height="20" viewBox="0 0 16 20"><path d="M4.4 18.6 L8.9 8.6" stroke="#333" stroke-width="2" stroke-linecap="round"/><path d="M11 1.6 L12.2 10.8 L8.7 8.1 L3 7.6 Z" fill="#333"/></svg>
<div class="t td c" style="left:709px;width:233px;top:541px;line-height:13px">0.2m<br>2秒</div>
</div>
</body></html>
